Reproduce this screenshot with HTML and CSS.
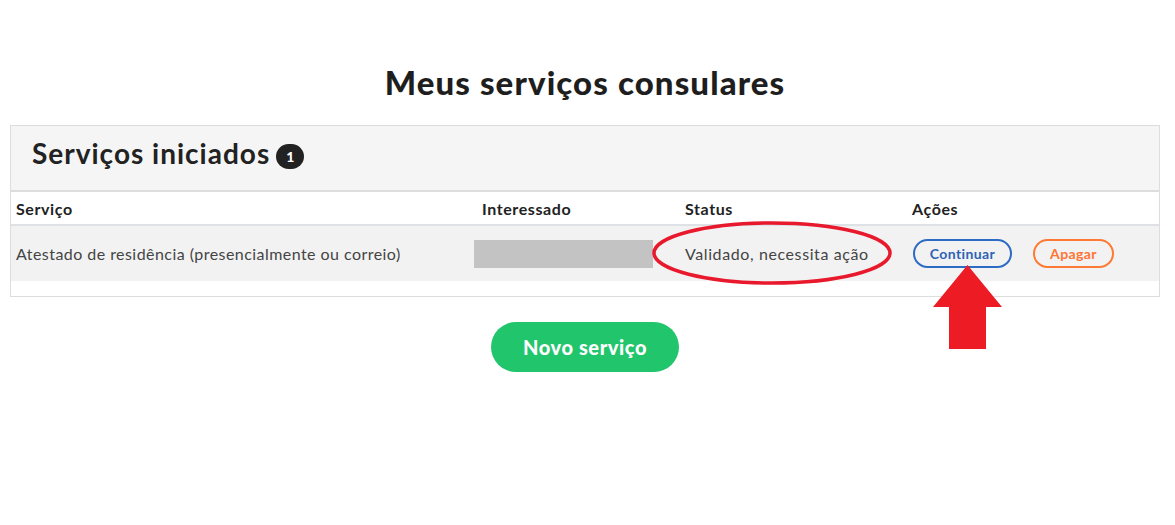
FILE: index.html
```html
<!DOCTYPE html>
<html lang="pt">
<head>
<meta charset="utf-8">
<title>Meus serviços consulares</title>
<link rel="stylesheet" href="styles.css">
</head>
<body>
<main class="page">
  <h1 class="title">Meus serviços consulares</h1>
  <section class="panel">
    <header class="panel-head">
      <h2 class="panel-title">Serviços iniciados <span class="badge">1</span></h2>
    </header>
    <table class="services">
      <colgroup>
        <col class="c-serv"><col class="c-int"><col class="c-status"><col class="c-acts">
      </colgroup>
      <thead>
        <tr><th>Serviço</th><th>Interessado</th><th>Status</th><th>Ações</th></tr>
      </thead>
      <tbody>
        <tr>
          <td>Atestado de residência (presencialmente ou correio)</td>
          <td class="int-cell"><span class="redacted"></span></td>
          <td class="status">Validado, necessita ação</td>
          <td><div class="actions"><button class="btn btn-blue">Continuar</button><button class="btn btn-orange">Apagar</button></div></td>
        </tr>
      </tbody>
    </table>
  </section>
  <div class="new-wrap"><button class="btn-new">Novo serviço</button></div>
</main>
<svg class="annot" width="1175" height="525" viewBox="0 0 1175 525" aria-hidden="true">
  <ellipse cx="772" cy="253" rx="118" ry="30" fill="none" stroke="#e8192c" stroke-width="3.5"/>
  <polygon points="967.5,265 1002,307 986,307 986,349 949,349 949,307 933,307" fill="#ed1c24"/>
</svg>
</body>
</html>
```
FILE: styles.css
```css
html, body { margin: 0; padding: 0; background: #fff; }
body { font-family: "Lato", "Open Sans", sans-serif; color: #222; position: relative; width: 1175px; height: 525px; overflow: hidden; }
.page { padding-top: 60px; width: 1170px; }
.title { margin: 0 0 20px; text-align: center; font-size: 33px; font-weight: 900; line-height: 45px; color: #1e1e1e; letter-spacing: 1.1px; }
.panel { margin-left: 10px; width: 1148px; border: 1px solid #ddd; padding-bottom: 15px; }
.panel-head { height: 64px; background: #f5f5f5; border-bottom: 2px solid #ddd; display: flex; align-items: center; padding-left: 21px; }
.panel-title { margin: 0 0 10px; font-size: 28px; font-weight: 700; color: #222; display: flex; align-items: center; gap: 6px; letter-spacing: 1px; }
.badge { display: inline-flex; align-items: center; justify-content: center; width: 28px; height: 25px; border-radius: 13px; background: #222; color: #fff; font-size: 14px; font-weight: 900; margin-top: 6px; letter-spacing: 0; }
.services { width: 100%; border-collapse: collapse; table-layout: fixed; }
.c-serv { width: 466px; } .c-int { width: 203px; } .c-status { width: 227px; } .c-acts { width: auto; }
.services th { text-align: left; font-size: 16px; font-weight: 700; height: 32px; padding: 0 5px; border-bottom: 2px solid #dee2e6; color: #222; letter-spacing: 0.6px; }
.services td { background: #f2f2f2; height: 55px; padding: 0 5px; font-size: 16px; font-weight: 400; color: #444; letter-spacing: 0.45px; }
.services td.status { letter-spacing: 0.6px; }
.int-cell { position: relative; }
.redacted { display: block; width: 179px; height: 28px; background: #c3c3c3; margin-left: -8px; }
.actions { display: flex; gap: 21px; align-items: center; margin-left: 1px; }
.btn { height: 29px; border-radius: 15px; background: transparent; font-family: inherit; font-size: 14px; font-weight: 700; padding: 0; cursor: pointer; letter-spacing: 0.4px; }
.btn-blue { width: 99px; border: 2px solid #2e6bc4; color: #2e62b5; }
.btn-orange { width: 81px; border: 2px solid #ff7a33; color: #ff7433; }
.new-wrap { display: flex; justify-content: center; padding-top: 25px; }
.btn-new { width: 188px; height: 50px; border: none; border-radius: 25px; background: #21c56c; color: #fff; font-family: inherit; font-size: 20px; font-weight: 900; letter-spacing: 0.6px; }
.annot { position: absolute; left: 0; top: 0; pointer-events: none; }
```
